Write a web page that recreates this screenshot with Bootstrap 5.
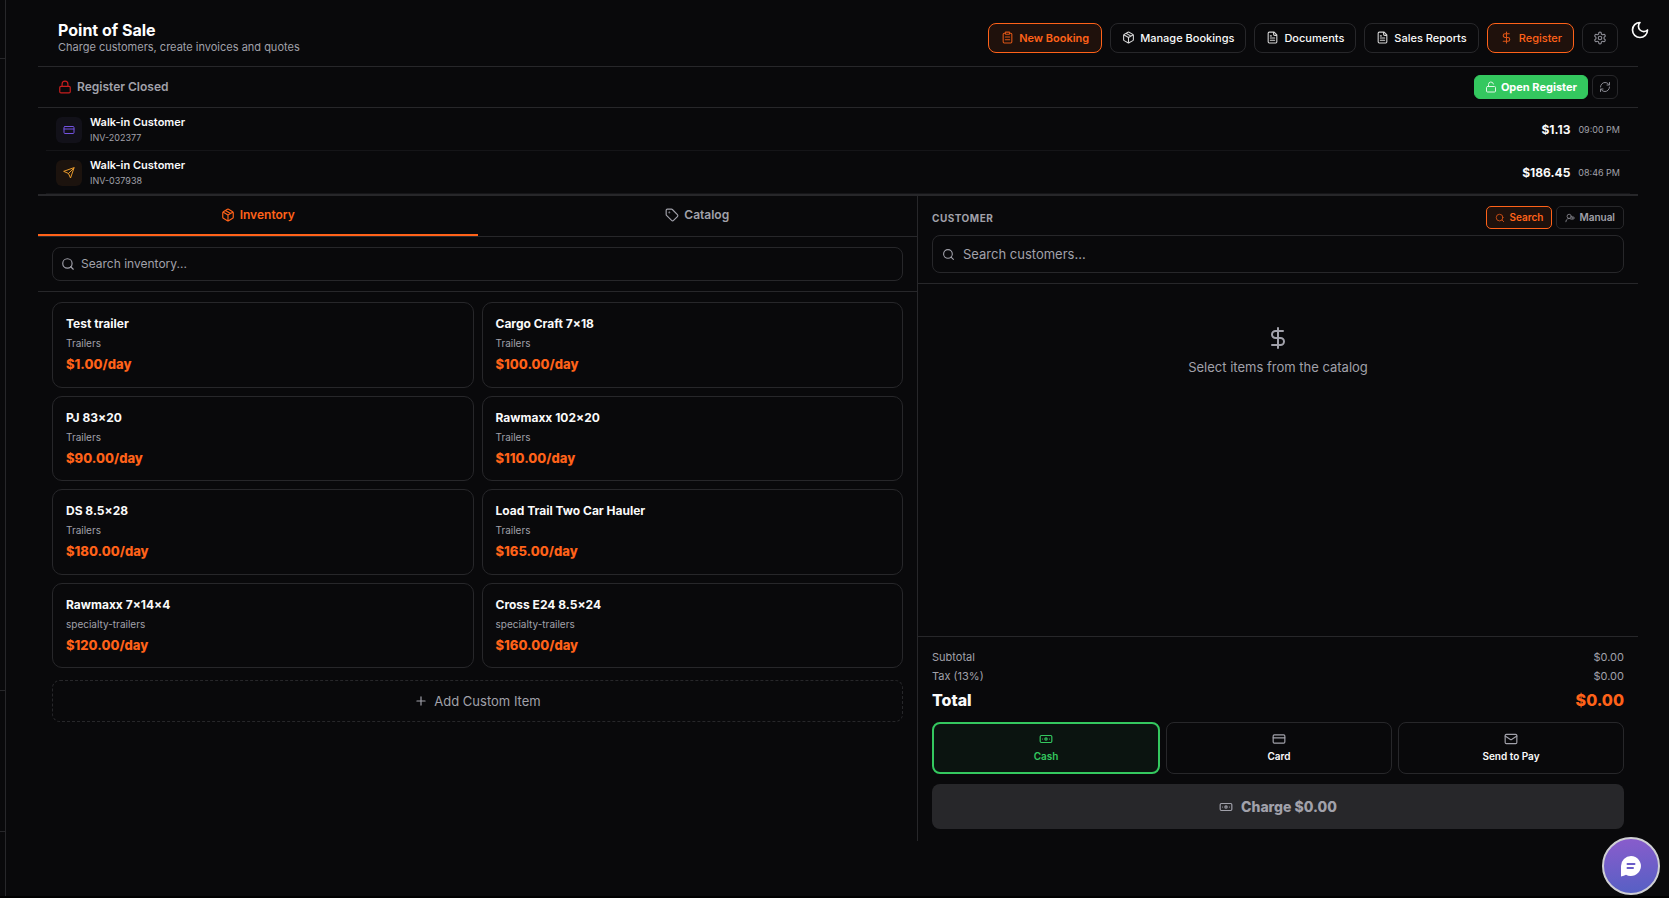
<!DOCTYPE html>
<html lang="en" data-bs-theme="dark">
<head>
<meta charset="utf-8">
<meta name="viewport" content="width=device-width, initial-scale=1">
<title>Point of Sale</title>
<link rel="stylesheet" href="https://cdn.jsdelivr.net/npm/bootstrap@5.3.0/dist/css/bootstrap.min.css">
<style>
:root{--bg:#09090b;--line:#27272a;--dim:#a1a1aa;--accent:#ff6219;--ok:#34c85f;--err:#c81e1e}
body{background:var(--bg);color:#fafafa;font-family:Inter,"Liberation Sans",sans-serif;font-size:13px;line-height:16px;border-bottom:2px solid #000}
svg{fill:none;stroke:currentColor;stroke-width:2;stroke-linecap:round;stroke-linejoin:round;flex:none}
.i10{width:10px;height:10px}.i12{width:12px;height:12px}.i13{width:13px;height:13px}.i14{width:14px;height:14px}.i24{width:24px;height:24px}
.rail{width:6px;border-right:1px solid var(--line)}
.rail-top{height:59px;border-bottom:1px solid var(--line)}
.rail-foot{height:142px;border-top:1px solid var(--line);border-bottom:1px solid var(--line)}
.rail-end{height:64px}
.page{padding:0 31px 0 32px}
.dim{color:var(--dim)}.accent{color:var(--accent)}
.line-b{border-bottom:1px solid var(--line)}
.topbar{padding:12px 20px 3px;min-height:67px}
.heading{padding-bottom:2px}
.topbar h1{font-size:16px;line-height:20px;font-weight:700;margin:0}
.sub{font-size:11px;line-height:14px}
.tool{display:inline-flex;align-items:center;justify-content:center;gap:5px;border:1px solid var(--line);background:transparent;border-radius:8px;color:#fafafa;font-size:11px;line-height:14px;font-weight:500;padding:7px 11px}
.tool svg{opacity:.85}
.tool.on{border-color:var(--accent);background:#1f110c;color:var(--accent);font-weight:600;padding:7px 12px}
.tool.plain{font-weight:500;gap:6px;padding:7px 11px 7px 12px}
.tool.gear{padding:7px 0;width:36px;color:var(--dim)}
.reg{padding:8px 20px}
.reg-text{font-size:12px;font-weight:600;gap:5px}
.lock{color:var(--err)}
.tool.open{background:var(--ok);border-color:var(--ok);font-weight:700;padding:4px 10px;border-radius:6px;gap:4px;color:#fff}
.tool.mini{padding:5px 6px;border-radius:6px;color:var(--dim)}
.rows{padding:0 8px}
.sale{padding:6px 10px 5px;border-bottom:1px solid #151518}
.tile{width:26px;height:26px;border-radius:6px}
.violet{background:#121119;color:#7352e0}.amber{background:#1c130e;color:#e89a2c}
.sale-name{font-size:11px;line-height:17px;font-weight:600}
.amt{font-size:12px;font-weight:700}
.tiny{font-size:9px;line-height:14px}
.split{border-top:1px solid var(--line)}
.left{width:55%;border-right:1px solid var(--line)}
.right{width:45%;min-height:645px}
.tab{flex:1;background:none;border:0;border-bottom:2px solid transparent;color:var(--dim);font-size:12px;line-height:16px;font-weight:600;padding:11px 0;gap:5px}
.tab.on{color:var(--accent);border-color:var(--accent)}
.field{border:1px solid var(--line);border-radius:8px;color:var(--dim);padding:8px;gap:6px}
.field input{background:none;border:0;outline:0;color:#fafafa;padding:0;font-size:12px;line-height:16px;height:16px;flex:1;min-width:0}
.field input::placeholder{color:var(--dim);opacity:1}
.field.lg{padding:10px 9px;gap:8px}.field.lg input{font-size:13px}
.pad{padding:10px 14px}
.goods{display:grid;grid-template-columns:1fr 1fr;gap:8px}
.item{text-align:left;background:none;border:1px solid var(--line);border-radius:10px;padding:12px 13px;color:#fafafa}
.item-name{font-size:12px;line-height:18px;font-weight:700}
.item-cat{font-size:10px;line-height:15px;margin:3px 0 4px;color:var(--dim)}
.item-price{font-size:13px;line-height:1.5;font-weight:800;color:var(--accent)}
.custom{border:1px dashed var(--line);border-radius:8px;background:none;color:var(--dim);font-size:13px;line-height:16px;padding:12px;gap:6px;margin-top:12px}
.cap{font-size:10px;font-weight:700;letter-spacing:.05em}
.cust-head{margin-bottom:6px}
.tool.pick{font-size:10px;line-height:13px;padding:4px 8px;border-radius:5px;gap:4px;font-weight:600}
.tool.pick.dim{color:var(--dim)}
.blank{padding-top:42px;gap:9px}
.foot{border-top:1px solid var(--line);padding:11px 14px 12px}
.sum{font-size:11px;line-height:19px}
.total{font-size:16px;line-height:20px;font-weight:800;margin:4px 0 12px}
.pays{gap:6px;margin-bottom:10px}
.pay{flex:1;display:flex;flex-direction:column;align-items:center;gap:4px;border:1px solid var(--line);border-radius:8px;background:none;color:#fafafa;font-size:10px;line-height:13px;font-weight:600;padding:9px 4px 10px}
.pay svg{color:var(--dim)}
.pay.on{border:2px solid var(--ok);background:#0b1410;color:var(--ok);padding:8px 4px 9px}
.pay.on svg{color:var(--ok)}
.charge{border:0;border-radius:8px;background:#27272a;color:var(--dim);font-size:14px;line-height:17px;font-weight:800;padding:14px;gap:8px}
.moon{position:fixed;top:20px;right:19px;background:none;border:0;padding:0;color:#fafafa;line-height:0}
.chat{position:fixed;right:9px;bottom:3px;width:58px;height:58px;border-radius:50%;border:2px solid #cfcfd4;background:linear-gradient(175deg,#8a5ccc,#5560c4);padding:0}
</style>
</head>
<body class="min-vh-100 d-flex">
<svg class="d-none" aria-hidden="true">
<symbol id="clip" viewBox="0 0 24 24"><rect x="8" y="2" width="8" height="4" rx="1"/><path d="M16 4h2a2 2 0 0 1 2 2v14a2 2 0 0 1-2 2H6a2 2 0 0 1-2-2V6a2 2 0 0 1 2-2h2M8 11h8M8 16h8"/></symbol>
<symbol id="box" viewBox="0 0 24 24"><path d="M11 21.73a2 2 0 0 0 2 0l7-4A2 2 0 0 0 21 16V8a2 2 0 0 0-1-1.73l-7-4a2 2 0 0 0-2 0l-7 4A2 2 0 0 0 3 8v8a2 2 0 0 0 1 1.73zM12 22V12M3.3 7 12 12l8.700-5M7.500 4.270l9 5.150"/></symbol>
<symbol id="doc" viewBox="0 0 24 24"><path d="M15 2H6a2 2 0 0 0-2 2v16a2 2 0 0 0 2 2h12a2 2 0 0 0 2-2V7zM14 2v4a2 2 0 0 0 2 2h4M10 9H8M16 13H8M16 17H8"/></symbol>
<symbol id="dollar" viewBox="0 0 24 24"><path d="M12 2v20M17 5H9.500a3.500 3.500 0 0 0 0 7h5a3.500 3.500 0 0 1 0 7H6"/></symbol>
<symbol id="gear" viewBox="0 0 24 24"><path d="M12.220 2h-.44a2 2 0 0 0-2 2v.18a2 2 0 0 1-1 1.730l-.43.25a2 2 0 0 1-2 0l-.15-.08a2 2 0 0 0-2.730.730l-.22.380a2 2 0 0 0 .730 2.730l.15.1a2 2 0 0 1 1 1.720v.510a2 2 0 0 1-1 1.740l-.15.090a2 2 0 0 0-.730 2.730l.22.380a2 2 0 0 0 2.730.730l.15-.080a2 2 0 0 1 2 0l.430.250a2 2 0 0 1 1 1.730V20a2 2 0 0 0 2 2h.440a2 2 0 0 0 2-2v-.180a2 2 0 0 1 1-1.730l.430-.250a2 2 0 0 1 2 0l.150.080a2 2 0 0 0 2.730-.730l.220-.390a2 2 0 0 0-.730-2.730l-.150-.080a2 2 0 0 1-1-1.740v-.500a2 2 0 0 1 1-1.740l.150-.090a2 2 0 0 0 .730-2.730l-.220-.380a2 2 0 0 0-2.730-.730l-.150.080a2 2 0 0 1-2 0l-.430-.250a2 2 0 0 1-1-1.730V4a2 2 0 0 0-2-2z"/><circle cx="12" cy="12" r="3"/></symbol>
<symbol id="lock" viewBox="0 0 24 24"><rect x="3" y="11" width="18" height="11" rx="2"/><path d="M7 11V7a5 5 0 0 1 10 0v4"/></symbol>
<symbol id="unlock" viewBox="0 0 24 24"><rect x="3" y="11" width="18" height="11" rx="2"/><path d="M7 11V7a5 5 0 0 1 9.900-1"/></symbol>
<symbol id="sync" viewBox="0 0 24 24"><path d="M3 12a9 9 0 0 1 9-9 9.750 9.750 0 0 1 6.740 2.740L21 8M21 3v5h-5M21 12a9 9 0 0 1-9 9 9.750 9.750 0 0 1-6.740-2.740L3 16M8 16H3v5"/></symbol>
<symbol id="card-i" viewBox="0 0 24 24"><rect x="2" y="5" width="20" height="14" rx="2"/><path d="M2 10h20"/></symbol>
<symbol id="send" viewBox="0 0 24 24"><path d="M22 2 11 13M22 2l-7 20-4-9-9-4z"/></symbol>
<symbol id="tag" viewBox="0 0 24 24"><path d="M12.600 2.600A2 2 0 0 0 11.200 2H4a2 2 0 0 0-2 2v7.200a2 2 0 0 0 .6 1.400l8.700 8.700a2.400 2.400 0 0 0 3.400 0l6.600-6.600a2.400 2.400 0 0 0 0-3.400z"/><circle cx="7.500" cy="7.500" r=".5"/></symbol>
<symbol id="find" viewBox="0 0 24 24"><circle cx="11" cy="11" r="8"/><path d="m21 21-4.300-4.300"/></symbol>
<symbol id="user" viewBox="0 0 24 24"><path d="M2 21a8 8 0 0 1 13.300-6M19 8v8M15 12h8"/><circle cx="10" cy="8" r="5"/></symbol>
<symbol id="plus" viewBox="0 0 24 24"><path d="M5 12h14M12 5v14"/></symbol>
<symbol id="cash" viewBox="0 0 24 24"><rect x="2" y="6" width="20" height="12" rx="2"/><circle cx="12" cy="12" r="2"/><path d="M6 12h.01M18 12h.01"/></symbol>
<symbol id="mail" viewBox="0 0 24 24"><rect x="2" y="4" width="20" height="16" rx="2"/><path d="m22 7-8.970 5.700a1.940 1.940 0 0 1-2.060 0L2 7"/></symbol>
<symbol id="moon" viewBox="0 0 24 24"><path d="M12 3a6 6 0 0 0 9 9 9 9 0 1 1-9-9z"/></symbol>
</svg>

<aside class="rail d-flex flex-column flex-shrink-0">
  <div class="rail-top"></div>
  <div class="flex-grow-1"></div>
  <div class="rail-foot"></div>
  <div class="rail-end"></div>
</aside>

<main class="page flex-grow-1">
  <header class="topbar line-b d-flex justify-content-between align-items-center">
    <div class="heading">
      <h1>Point of Sale</h1>
      <div class="sub dim">Charge customers, create invoices and quotes</div>
    </div>
    <nav class="d-flex gap-2" aria-label="Sections">
      <button type="button" class="tool on"><svg class="i13"><use href="#clip"/></svg>New Booking</button>
      <button type="button" class="tool"><svg class="i13"><use href="#box"/></svg>Manage Bookings</button>
      <button type="button" class="tool"><svg class="i13"><use href="#doc"/></svg>Documents</button>
      <button type="button" class="tool"><svg class="i13"><use href="#doc"/></svg>Sales Reports</button>
      <button type="button" class="tool on plain"><svg class="i13"><use href="#dollar"/></svg>Register</button>
      <button type="button" class="tool gear" aria-label="Settings"><svg class="i14"><use href="#gear"/></svg></button>
    </nav>
  </header>

  <section class="reg line-b d-flex justify-content-between align-items-center">
    <div class="reg-text d-flex align-items-center dim"><svg class="i14 lock"><use href="#lock"/></svg>Register Closed</div>
    <div class="d-flex gap-1">
      <button type="button" class="tool open"><svg class="i12"><use href="#unlock"/></svg>Open Register</button>
      <button type="button" class="tool mini" aria-label="Refresh"><svg class="i12"><use href="#sync"/></svg></button>
    </div>
  </section>

  <section class="rows">
    <div class="sale d-flex align-items-center gap-2">
      <span class="tile violet d-flex align-items-center justify-content-center"><svg class="i12"><use href="#card-i"/></svg></span>
      <div class="flex-grow-1"><div class="sale-name">Walk-in Customer</div><div class="tiny dim">INV-202377</div></div>
      <strong class="amt">$1.13</strong><span class="tiny dim">09:00 PM</span>
    </div>
    <div class="sale d-flex align-items-center gap-2">
      <span class="tile amber d-flex align-items-center justify-content-center"><svg class="i12"><use href="#send"/></svg></span>
      <div class="flex-grow-1"><div class="sale-name">Walk-in Customer</div><div class="tiny dim">INV-037938</div></div>
      <strong class="amt">$186.45</strong><span class="tiny dim">08:46 PM</span>
    </div>
  </section>

  <div class="line-b"></div>
  <div class="split d-flex">
    <section class="left">
      <div class="d-flex line-b" role="tablist">
        <button type="button" role="tab" aria-selected="true" class="tab on d-flex align-items-center justify-content-center"><svg class="i14"><use href="#box"/></svg>Inventory</button>
        <button type="button" role="tab" aria-selected="false" class="tab d-flex align-items-center justify-content-center"><svg class="i14"><use href="#tag"/></svg>Catalog</button>
      </div>
      <div class="pad line-b">
        <label class="field d-flex align-items-center"><svg class="i14"><use href="#find"/></svg><input type="search" placeholder="Search inventory..." aria-label="Search inventory"></label>
      </div>
      <div class="pad">
        <div class="goods">
          <button type="button" class="item"><div class="item-name">Test trailer</div><div class="item-cat">Trailers</div><div class="item-price">$1.00/day</div></button>
          <button type="button" class="item"><div class="item-name">Cargo Craft 7×18</div><div class="item-cat">Trailers</div><div class="item-price">$100.00/day</div></button>
          <button type="button" class="item"><div class="item-name">PJ 83×20</div><div class="item-cat">Trailers</div><div class="item-price">$90.00/day</div></button>
          <button type="button" class="item"><div class="item-name">Rawmaxx 102×20</div><div class="item-cat">Trailers</div><div class="item-price">$110.00/day</div></button>
          <button type="button" class="item"><div class="item-name">DS 8.5×28</div><div class="item-cat">Trailers</div><div class="item-price">$180.00/day</div></button>
          <button type="button" class="item"><div class="item-name">Load Trail Two Car Hauler</div><div class="item-cat">Trailers</div><div class="item-price">$165.00/day</div></button>
          <button type="button" class="item"><div class="item-name">Rawmaxx 7×14×4</div><div class="item-cat">specialty-trailers</div><div class="item-price">$120.00/day</div></button>
          <button type="button" class="item"><div class="item-name">Cross E24 8.5×24</div><div class="item-cat">specialty-trailers</div><div class="item-price">$160.00/day</div></button>
        </div>
        <button type="button" class="custom w-100 d-flex align-items-center justify-content-center"><svg class="i14"><use href="#plus"/></svg>Add Custom Item</button>
      </div>
    </section>

    <section class="right d-flex flex-column">
      <div class="pad line-b">
        <div class="cust-head d-flex justify-content-between align-items-center">
          <span class="cap dim">CUSTOMER</span>
          <div class="d-flex gap-1">
            <button type="button" class="tool pick on"><svg class="i10"><use href="#find"/></svg>Search</button>
            <button type="button" class="tool pick dim"><svg class="i10"><use href="#user"/></svg>Manual</button>
          </div>
        </div>
        <label class="field lg d-flex align-items-center"><svg class="i13"><use href="#find"/></svg><input type="search" placeholder="Search customers..." aria-label="Search customers"></label>
      </div>
      <div class="blank flex-grow-1 dim d-flex flex-column align-items-center">
        <svg class="i24"><use href="#dollar"/></svg>
        <div>Select items from the catalog</div>
      </div>
      <div class="foot">
        <div class="sum dim d-flex justify-content-between"><span>Subtotal</span><span>$0.00</span></div>
        <div class="sum dim d-flex justify-content-between"><span>Tax (13%)</span><span>$0.00</span></div>
        <div class="total d-flex justify-content-between"><span>Total</span><span class="accent">$0.00</span></div>
        <div class="pays d-flex">
          <button type="button" class="pay on"><svg class="i14"><use href="#cash"/></svg>Cash</button>
          <button type="button" class="pay"><svg class="i14"><use href="#card-i"/></svg>Card</button>
          <button type="button" class="pay"><svg class="i14"><use href="#mail"/></svg>Send to Pay</button>
        </div>
        <button type="button" class="charge w-100 d-flex align-items-center justify-content-center"><svg class="i14"><use href="#cash"/></svg>Charge $0.00</button>
      </div>
    </section>
  </div>
</main>

<button type="button" class="moon" aria-label="Toggle theme"><svg width="20" height="20"><use href="#moon"/></svg></button>
<button type="button" class="chat" aria-label="Open chat"><svg width="24" height="24" viewBox="0 0 24 24"><path d="M12 2a10 10 0 1 1-5 18.700Q5 22 2 22.500V12A10 10 0 0 1 12 2z" fill="#fff" stroke="none"/><path d="M8.500 10h7M8.500 14h5.500" stroke="#6a5cc8"/></svg></button>
<script src="https://cdn.jsdelivr.net/npm/bootstrap@5.3.0/dist/js/bootstrap.bundle.min.js"></script>
</body>
</html>
